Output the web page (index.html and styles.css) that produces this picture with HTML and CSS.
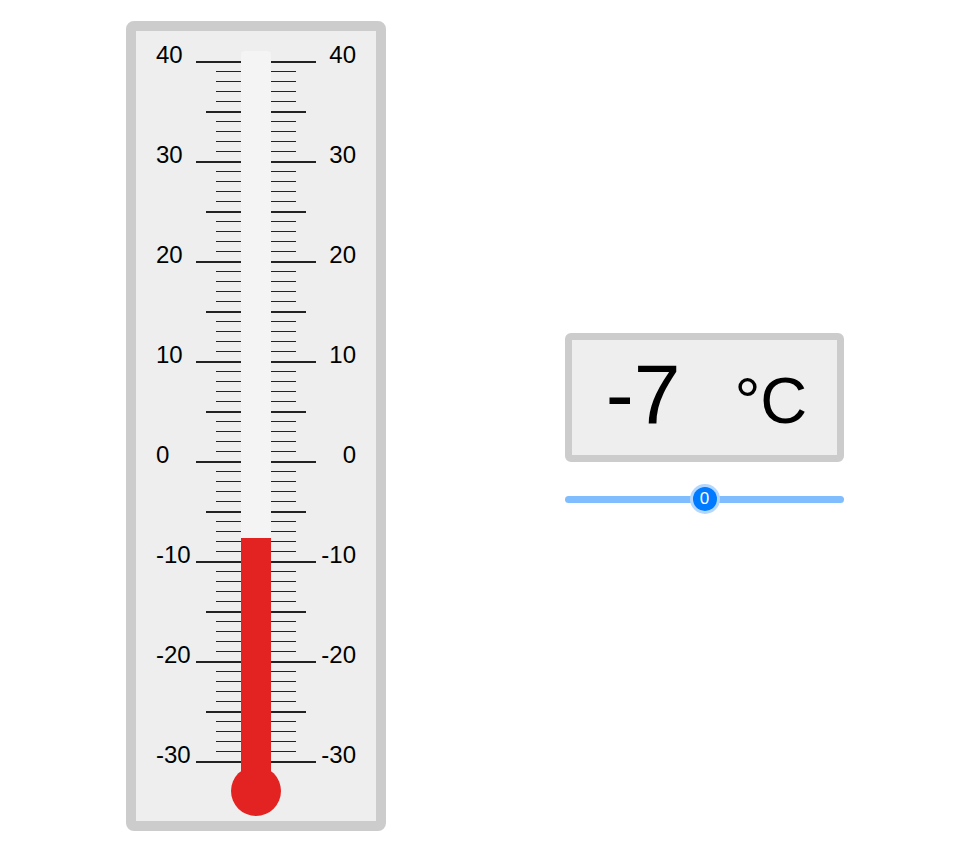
FILE: index.html
```html
<!DOCTYPE html>
<html lang="en">
<head>
<meta charset="utf-8">
<title>Thermometer</title>
<link rel="stylesheet" href="styles.css">
</head>
<body>
<main class="page">
  <div class="thermo">
    <svg class="thermo-svg" width="240" height="790" viewBox="0 0 240 790" xmlns="http://www.w3.org/2000/svg">
      <defs>
        <pattern id="minor" x="0" y="0" width="240" height="10" patternUnits="userSpaceOnUse">
          <rect x="0" y="0" width="240" height="1" fill="#222"/>
        </pattern>
        <pattern id="medium" x="0" y="80" width="240" height="100" patternUnits="userSpaceOnUse">
          <rect x="0" y="0" width="240" height="2" fill="#222"/>
        </pattern>
        <pattern id="major" x="0" y="30" width="240" height="100" patternUnits="userSpaceOnUse">
          <rect x="0" y="0" width="240" height="2" fill="#222"/>
        </pattern>
      </defs>
      <rect x="80" y="40" width="80" height="681" fill="url(#minor)"/>
      <rect x="70" y="80" width="100" height="602" fill="url(#medium)"/>
      <rect x="60" y="30" width="120" height="702" fill="url(#major)"/>
      <g class="labels">
        <text x="20" y="32">40</text><text x="220" y="32" text-anchor="end">40</text>
        <text x="20" y="132">30</text><text x="220" y="132" text-anchor="end">30</text>
        <text x="20" y="232">20</text><text x="220" y="232" text-anchor="end">20</text>
        <text x="20" y="332">10</text><text x="220" y="332" text-anchor="end">10</text>
        <text x="20" y="432">0</text><text x="220" y="432" text-anchor="end">0</text>
        <text x="20" y="532">-10</text><text x="220" y="532" text-anchor="end">-10</text>
        <text x="20" y="632">-20</text><text x="220" y="632" text-anchor="end">-20</text>
        <text x="20" y="732">-30</text><text x="220" y="732" text-anchor="end">-30</text>
      </g>
      <rect x="105" y="20" width="30" height="740" rx="4" fill="#f4f4f4"/>
      <rect x="105" y="507" width="30" height="253" fill="#e32322"/>
      <circle cx="120" cy="760" r="25" fill="#e32322"/>
    </svg>
  </div>
  <section class="panel">
    <div class="readout">
      <span class="value">-7</span>
      <span class="unit">°C</span>
    </div>
    <div class="slider">
      <div class="track"></div>
      <div class="thumb">0</div>
    </div>
  </section>
</main>
</body>
</html>
```
FILE: styles.css
```css
html, body {
  margin: 0;
  padding: 0;
  background: #ffffff;
}

body {
  font-family: "Liberation Sans", Arial, sans-serif;
  color: #000;
}

.page {
  display: flex;
  align-items: flex-start;
  gap: 179px;
  padding: 21px 0 0 126px;
}

.thermo {
  box-sizing: border-box;
  width: 260px;
  height: 810px;
  border: 10px solid #cccccc;
  border-radius: 8px;
  background: #eeeeee;
  flex: none;
}

.thermo-svg {
  display: block;
}

.labels text {
  font-family: "Liberation Sans", Arial, sans-serif;
  font-size: 24px;
  fill: #000;
}

.panel {
  width: 279px;
  margin-top: 312px;
  display: flex;
  flex-direction: column;
  gap: 22px;
}

.readout {
  box-sizing: border-box;
  height: 129px;
  border: 7px solid #cccccc;
  border-radius: 6px;
  background: #eeeeee;
  display: flex;
  justify-content: center;
  align-items: baseline;
  gap: 54px;
  padding: 12px 0 0 4px;
}

.value {
  font-size: 84px;
  line-height: 84px;
}

.unit {
  font-size: 65px;
  line-height: 84px;
}

.slider {
  position: relative;
  height: 30px;
  display: flex;
  align-items: center;
}

.track {
  width: 100%;
  height: 7px;
  border-radius: 4px;
  background: #80bdff;
}

.thumb {
  position: absolute;
  left: 50%;
  top: 50%;
  width: 24px;
  height: 24px;
  margin: -12px 0 0 -12px;
  border-radius: 50%;
  background: #007bff;
  box-shadow: 0 0 0 3px #b3d7ff;
  color: #fff;
  font-size: 17px;
  line-height: 24px;
  text-align: center;
}
```
